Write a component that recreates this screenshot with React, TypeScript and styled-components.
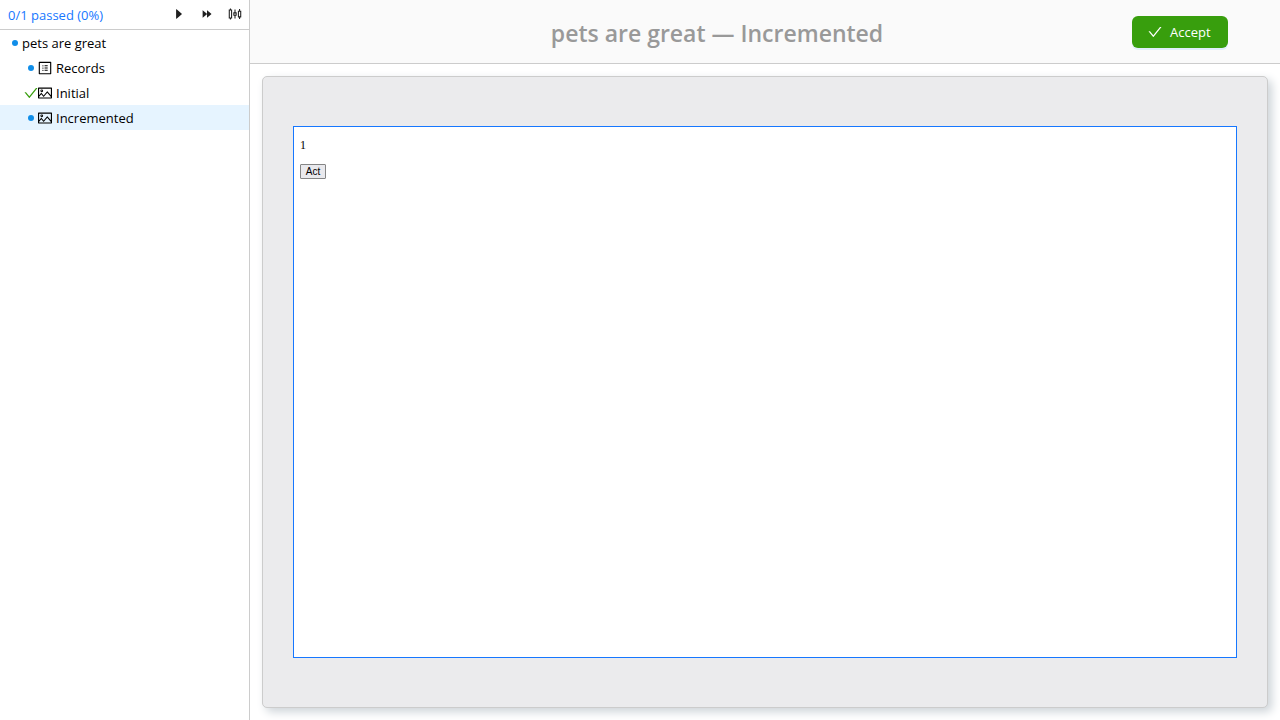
import React from 'react';
import styled, { createGlobalStyle } from 'styled-components';
import {
  AiFillForward,
  AiOutlineCaretRight,
  AiOutlineCheck,
  AiOutlinePicture,
  AiOutlineProfile,
  AiOutlineSliders,
} from 'react-icons/ai';

const GlobalStyle = createGlobalStyle`
  *, *::before, *::after { box-sizing: border-box; }
  body {
    margin: 0;
    background: #fff;
    color: #000;
    font-family: "Segoe UI", "Open Sans", "Noto Sans", sans-serif;
    font-size: 13px;
  }
  svg { display: block; }
`;

// Crops the empty margin around the glyphs so they fill their box.
const TIGHT = '64 64 896 896';

const Layout = styled.div`
  display: grid;
  grid-template-columns: 250px minmax(0, 1fr);
  min-height: 100vh;
`;

const Sidebar = styled.aside`
  border-right: 1px solid #ccc;
`;

const Toolbar = styled.div`
  display: flex;
  align-items: center;
  height: 30px;
  padding-left: 8px;
  border-bottom: 1px solid #ccc;
`;

const Summary = styled.a`
  flex: 1;
  color: #1677ff;
  text-decoration: none;
`;

const ToolButton = styled.button`
  display: flex;
  align-items: center;
  justify-content: center;
  width: 28px;
  height: 28px;
  padding: 0 0 2px;
  border: 0;
  background: none;
  color: #1f1f1f;
  font-size: 14px;
`;

const Tree = styled.ul`
  margin: 0;
  padding: 0;
  list-style: none;
`;

const Row = styled.button<{ $depth: number; $selected?: boolean }>`
  display: flex;
  align-items: center;
  width: 100%;
  height: 25px;
  padding: 0 0 0 ${(p) => 8 + p.$depth * 16}px;
  border: 0;
  background: ${(p) => (p.$selected ? '#e6f4ff' : 'transparent')};
  color: #000;
  font: inherit;
  text-align: left;
`;

const Status = styled.span<{ $passed?: boolean }>`
  display: flex;
  align-items: center;
  justify-content: center;
  width: 14px;
  height: 14px;
  color: ${(p) => (p.$passed ? '#389e0d' : '#1890ff')};
  font-size: 14px;
`;

const Dot = styled.span`
  width: 6px;
  height: 6px;
  border-radius: 50%;
  background: #108ee9;
`;

const Kind = styled.span`
  margin-right: 4px;
  font-size: 14px;
`;

const Main = styled.main`
  display: flex;
  flex-direction: column;
`;

const Header = styled.header`
  display: flex;
  align-items: center;
  height: 64px;
  padding: 0 52px;
  border-bottom: 1px solid #ccc;
  background: #fafafa;
`;

const Title = styled.h1`
  flex: 1;
  margin: 0;
  padding-top: 2px;
  color: #999;
  font-size: 23px;
  font-weight: 600;
  line-height: 32px;
  text-align: center;
`;

const AcceptButton = styled.button`
  display: flex;
  align-items: center;
  gap: 8px;
  width: 96px;
  height: 32px;
  padding: 0 16px;
  border: 0;
  border-radius: 6px;
  background: #389e0d;
  box-shadow: 0 2px 0 rgba(5, 145, 255, 0.1);
  color: #fff;
  font: inherit;
  svg { font-size: 14px; }
`;

const Panel = styled.section`
  display: flex;
  flex: 1;
  margin: 12px;
  padding: 49px 30px;
  border: 1px solid #ccc;
  border-radius: 5px;
  background: #ebebed;
  box-shadow: 4px 4px 10px #ced4d9;
`;

const Screen = styled.div`
  flex: 1;
  padding: 11px 6px;
  border: 1px solid #1677ff;
  background: #fff;
  font-family: "Liberation Serif", serif;
  font-size: 12px;
`;

const Count = styled.p`
  margin: 0 0 12px;
  line-height: 14px;
`;

const ActButton = styled.button`
  display: block;
  width: 26px;
  height: 15px;
  padding: 0;
  border: 1px solid #858585;
  border-radius: 1px;
  background: #e9e9ed;
  color: #000;
  font-family: "Liberation Sans", sans-serif;
  font-size: 10px;
  line-height: 13px;
`;

type Item = {
  label: string;
  depth: number;
  kind?: 'records' | 'image';
  passed?: boolean;
  selected?: boolean;
};

const items: Item[] = [
  { label: 'pets are great', depth: 0 },
  { label: 'Records', depth: 1, kind: 'records' },
  { label: 'Initial', depth: 1, kind: 'image', passed: true },
  { label: 'Incremented', depth: 1, kind: 'image', selected: true },
];

export default function App() {
  return (
    <>
      <GlobalStyle />
      <Layout>
        <Sidebar>
          <Toolbar>
            <Summary href="#">0/1 passed (0%)</Summary>
            <ToolButton aria-label="Run"><AiOutlineCaretRight /></ToolButton>
            <ToolButton aria-label="Run all"><AiFillForward /></ToolButton>
            <ToolButton aria-label="Settings"><AiOutlineSliders viewBox={TIGHT} /></ToolButton>
          </Toolbar>
          <Tree>
            {items.map((item) => (
              <li key={item.label}>
                <Row $depth={item.depth} $selected={item.selected}>
                  <Status $passed={item.passed}>
                    {item.passed ? <AiOutlineCheck viewBox={TIGHT} /> : <Dot />}
                  </Status>
                  {item.kind && (
                    <Kind>
                      {item.kind === 'records' ? (
                        <AiOutlineProfile viewBox={TIGHT} />
                      ) : (
                        <AiOutlinePicture viewBox={TIGHT} />
                      )}
                    </Kind>
                  )}
                  {item.label}
                </Row>
              </li>
            ))}
          </Tree>
        </Sidebar>
        <Main>
          <Header>
            <Title>pets are great — Incremented</Title>
            <AcceptButton><AiOutlineCheck viewBox={TIGHT} />Accept</AcceptButton>
          </Header>
          <Panel>
            <Screen>
              <Count>1</Count>
              <ActButton>Act</ActButton>
            </Screen>
          </Panel>
        </Main>
      </Layout>
    </>
  );
}
